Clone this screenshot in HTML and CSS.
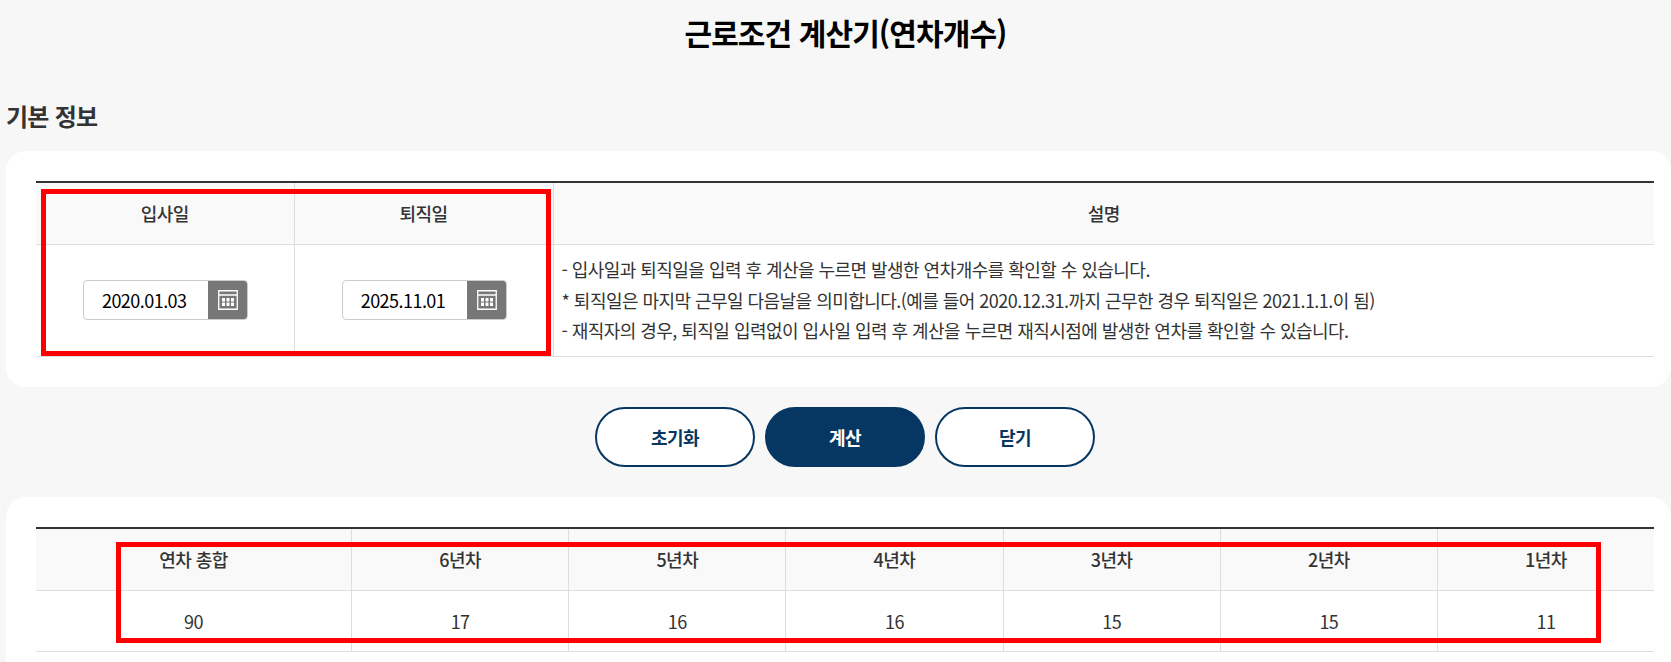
FILE: index.html
```html
<!DOCTYPE html>
<html lang="ko">
<head>
<meta charset="utf-8">
<title>근로조건 계산기(연차개수)</title>
<link rel="stylesheet" href="styles.css">
</head>
<body>
<main class="page">
  <h1 class="title">근로조건 계산기(연차개수)</h1>
  <h2 class="section-title">기본 정보</h2>
  <section class="card card-top">
    <div class="table-wrap">
      <table class="info-table">
        <colgroup><col class="c-date"><col class="c-date2"><col></colgroup>
        <thead>
          <tr><th>입사일</th><th>퇴직일</th><th>설명</th></tr>
        </thead>
        <tbody>
          <tr>
            <td class="date-cell">
              <div class="date-field"><span class="date-value">2020.01.03</span><span class="cal-btn"><svg class="cal-icon" viewBox="0 0 20 20" width="20" height="20"><path d="M.75.75h18.5v18.5H.75z" fill="none" stroke="#fff" stroke-width="1.3"/><path d="M.75 5h18.5" stroke="#fff" stroke-width="1.3"/><path d="M4 8h3v3.4H4zM8.5 8h3v3.4h-3zM13 8h3v3.4h-3zM4 12.6h3V16H4zM8.5 12.6h3V16h-3zM13 12.6h3V16h-3z" fill="#fff"/></svg></span></div>
            </td>
            <td class="date-cell">
              <div class="date-field"><span class="date-value">2025.11.01</span><span class="cal-btn"><svg class="cal-icon" viewBox="0 0 20 20" width="20" height="20"><path d="M.75.75h18.5v18.5H.75z" fill="none" stroke="#fff" stroke-width="1.3"/><path d="M.75 5h18.5" stroke="#fff" stroke-width="1.3"/><path d="M4 8h3v3.4H4zM8.5 8h3v3.4h-3zM13 8h3v3.4h-3zM4 12.6h3V16H4zM8.5 12.6h3V16h-3zM13 12.6h3V16h-3z" fill="#fff"/></svg></span></div>
            </td>
            <td class="desc">
              <p>- 입사일과 퇴직일을 입력 후 계산을 누르면 발생한 연차개수를 확인할 수 있습니다.</p>
              <p>* 퇴직일은 마지막 근무일 다음날을 의미합니다.(예를 들어 2020.12.31.까지 근무한 경우 퇴직일은 2021.1.1.이 됨)</p>
              <p>- 재직자의 경우, 퇴직일 입력없이 입사일 입력 후 계산을 누르면 재직시점에 발생한 연차를 확인할 수 있습니다.</p>
            </td>
          </tr>
        </tbody>
      </table>
      <div class="mark mark-top"></div>
    </div>
  </section>
  <div class="actions">
    <button class="btn" type="button">초기화</button>
    <button class="btn btn-primary" type="button">계산</button>
    <button class="btn" type="button">닫기</button>
  </div>
  <section class="card card-bottom">
    <div class="table-wrap">
      <table class="result-table">
        <colgroup><col class="c-total"><col class="c-year"><col class="c-year"><col class="c-year"><col class="c-year"><col class="c-year"><col></colgroup>
        <thead>
          <tr><th>연차 총합</th><th>6년차</th><th>5년차</th><th>4년차</th><th>3년차</th><th>2년차</th><th>1년차</th></tr>
        </thead>
        <tbody>
          <tr><td>90</td><td>17</td><td>16</td><td>16</td><td>15</td><td>15</td><td>11</td></tr>
        </tbody>
      </table>
      <div class="mark mark-bottom"></div>
    </div>
  </section>
</main>
</body>
</html>
```
FILE: styles.css
```css
* { box-sizing: border-box; }
html, body { margin: 0; padding: 0; height: 662px; overflow: hidden; background: #f7f7f7; }
body {
  font-family: "Noto Sans CJK KR", "Noto Sans", sans-serif;
  color: #333;
  font-size: 18px;
  letter-spacing: -0.03em;
}
.page { width: 1671px; padding-left: 6px; }
.title {
  margin: 0;
  padding: 10px 0 0 14px;
  height: 95px;
  text-align: center;
  font-size: 30px;
  line-height: 44px;
  font-weight: 700;
  color: #000;
  letter-spacing: -0.03em;
}
.section-title {
  margin: 0;
  height: 56px;
  padding-top: 4px;
  font-size: 24px;
  line-height: 34px;
  font-weight: 700;
  color: #333;
  letter-spacing: -0.03em;
}
.card {
  background: #fff;
  border-radius: 20px;
  padding: 30px 17px 30px 30px;
}
.table-wrap { position: relative; }
table {
  width: 100%;
  border-collapse: collapse;
  table-layout: fixed;
  border-top: 2px solid #333;
}
th {
  background: #f9f9f9;
  font-weight: 500;
  color: #333;
  text-align: center;
  border-bottom: 1px solid #ddd;
  border-right: 1px solid #ddd;
  padding: 0;
}
td {
  border-bottom: 1px solid #ddd;
  border-right: 1px solid #ddd;
  padding: 0;
  text-align: center;
}
th:last-child, td:last-child { border-right: 0; }
.info-table th { height: 62px; }
.info-table td { height: 112px; }
.c-date { width: 258px; }
.c-date2 { width: 259px; }
.info-table .date-cell { padding-left: 2px; }
.date-field {
  width: 165px;
  height: 40px;
  margin: 0 auto;
  display: flex;
  align-items: stretch;
  border: 1px solid #ccc;
  border-radius: 4px;
  overflow: hidden;
  background: #fff;
}
.date-value {
  flex: 1;
  padding-right: 4px;
  text-align: center;
  line-height: 38px;
  font-size: 18px;
  color: #000;
}
.cal-btn {
  width: 39px;
  background: #777;
  display: flex;
  align-items: center;
  justify-content: center;
}
.cal-icon { display: block; }
.desc { text-align: left; padding-left: 8px; }
.desc p {
  margin: 0;
  font-size: 18px;
  line-height: 30.6px;
  color: #333;
}
.actions {
  display: flex;
  justify-content: center;
  gap: 10px;
  padding: 20px 0 30px 13px;
}
.btn {
  width: 160px;
  height: 60px;
  border: 2px solid #063763;
  border-radius: 30px;
  background: #fff;
  color: #063763;
  font-family: inherit;
  font-size: 18px;
  font-weight: 700;
  letter-spacing: -0.03em;
  padding: 0;
}
.btn-primary { background: #063763; color: #fff; }
.result-table th { height: 63px; }
.result-table td { height: 61px; color: #333; }
.c-total { width: 315.5px; }
.c-year { width: 217.2px; }
.mark { position: absolute; border: 5px solid #f00; pointer-events: none; }
.mark-top { left: 5px; top: 8px; width: 510px; height: 167px; }
.mark-bottom { left: 80px; top: 15px; width: 1485px; height: 101px; }
```
